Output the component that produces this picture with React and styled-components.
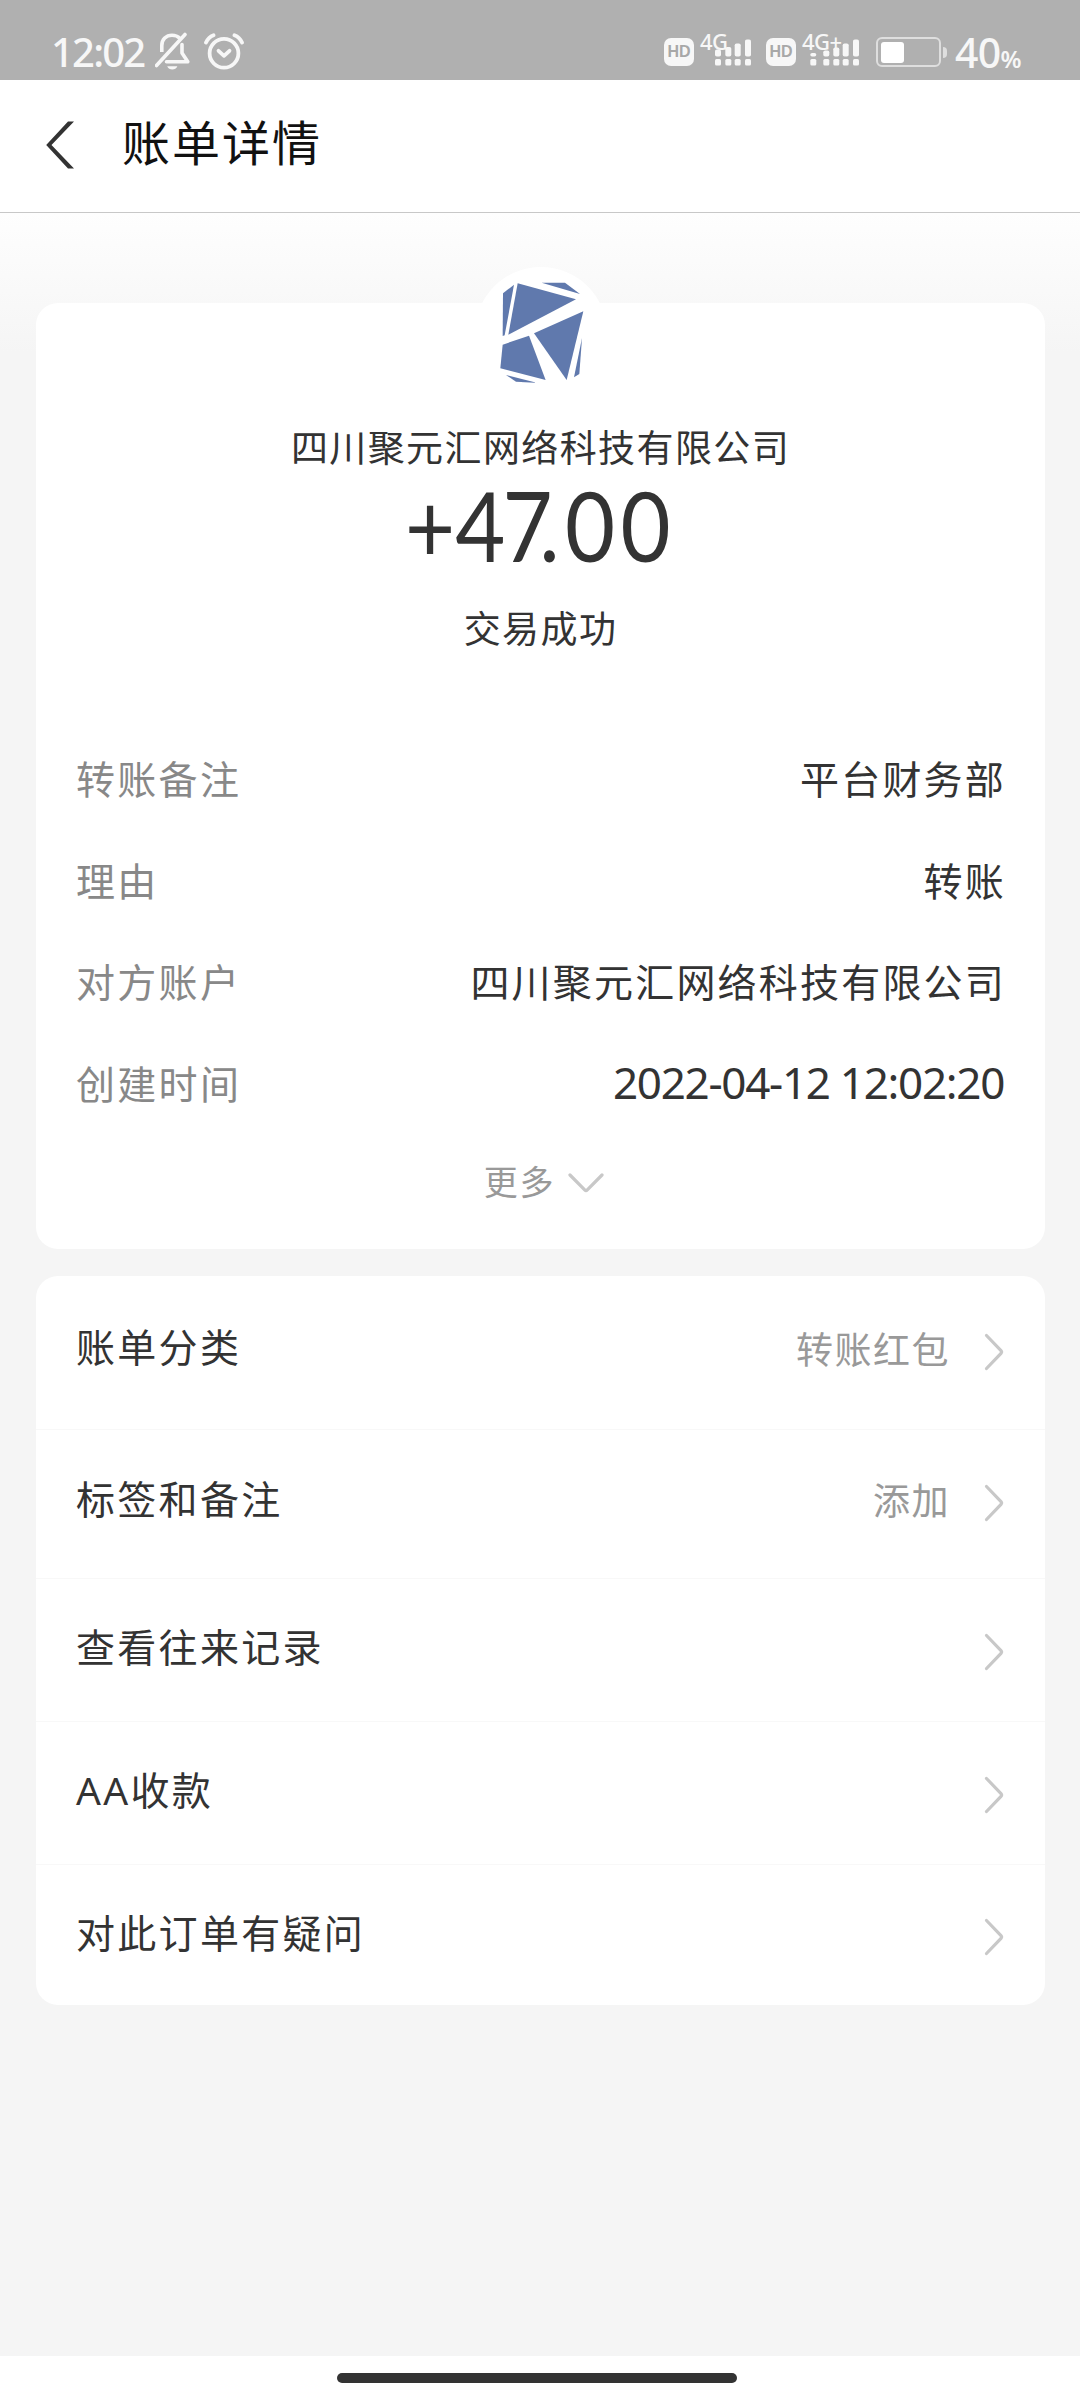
import styled, { createGlobalStyle } from 'styled-components';

const details = [
  { label: '转账备注', value: '平台财务部' },
  { label: '理由', value: '转账' },
  { label: '对方账户', value: '四川聚元汇网络科技有限公司' },
  { label: '创建时间', value: '2022-04-12 12:02:20', numeric: true },
];

const actions = [
  { label: '账单分类', value: '转账红包', height: 153 },
  { label: '标签和备注', value: '添加', height: 149 },
  { label: '查看往来记录', height: 143, shift: 5 },
  { label: 'AA收款', height: 143, shift: 5 },
  { label: '对此订单有疑问', height: 141, shift: 6 },
];

const MuteIcon = () => (
  <svg width="36" height="40" viewBox="0 0 36 40" fill="none" stroke="#f7f7f7" strokeWidth="3.6">
    <path d="M6.8 21v-6.5c0-6.2 4.4-10.3 10.2-10.3 3.2 0 5.8 1 7.7 3" />
    <path d="M1.5 34.5 30 3.5" strokeLinecap="round" />
    <path d="M27 13.5v8.5l5.800 8.700H11.500" strokeLinejoin="round" strokeLinecap="round" />
    <path d="M12.200 35.200h10.200c-1 2.300-2.800 3.300-5.100 3.300s-4.100-1-5.100-3.300z" fill="#f7f7f7" stroke="none" />
  </svg>
);

const AlarmIcon = () => (
  <svg width="40" height="40" viewBox="0 0 40 40" fill="none" stroke="#f7f7f7" strokeWidth="3.8" strokeLinecap="round">
    <circle cx="20" cy="22.3" r="14.4" />
    <path d="M14.5 19.8 20 24.8l5.500-5" strokeLinejoin="round" />
    <path d="M2 11.500C3.500 8 6 5.500 9.500 4.200M38 11.500C36.500 8 34 5.500 30.500 4.200" />
  </svg>
);

const SignalBars = ({ tops, xs, width }) => (
  <svg width={width} height="40" viewBox={`0 0 ${width} 40`} fill="#f7f7f7">
    {tops.map((top, i) => (
      <g key={xs[i]}>
        <rect x={xs[i]} y={top} width="6" height={25.5 - top} rx="1.8" />
        <rect x={xs[i]} y="28" width="6" height="6.5" rx="1.5" />
      </g>
    ))}
  </svg>
);

const BackIcon = () => (
  <svg width="30" height="48" viewBox="0 0 30 48" fill="#333">
    <path d="M22 .5h6L5.500 24l22.500 23.500h-6L.2 24z" />
  </svg>
);

const ArrowRight = () => (
  <svg width="20" height="28" viewBox="0 0 20 28" fill="none" stroke="#c8c8c8" strokeWidth="3.2" strokeLinecap="round" strokeLinejoin="round" overflow="visible">
    <path d="M2.500-2.500 17 12.700q1.200 1.300 0 2.600L2.500 30.500" />
  </svg>
);

const ArrowDown = () => (
  <svg width="36" height="20" viewBox="0 0 36 20" fill="none" stroke="#c8c8c8" strokeWidth="3.2" strokeLinecap="round" strokeLinejoin="round">
    <path d="M2 2 16.700 16.800q1.300 1.300 2.600 0L34 2" />
  </svg>
);

const CompanyLogo = () => (
  <svg width="84" height="102" viewBox="180 126 252 306" fill="#6079ad">
    <path d="M189 160 222 134 194 286 188 288z" />
    <path d="M233 130 408 178 205 284z" />
    <path d="M305 128H375L420 162z" />
    <path d="M430 214 380 420 282 280z" />
    <path d="M188 314 267 287 317 420 181 385z" />
    <path d="M198 405 290 428 228 425z" />
    <path d="M426 294 418 402 402 412z" />
  </svg>
);

const App = () => {
  return (
    <Page>
      <GlobalStyle />
      <StatusBar>
        <StatusGroup>
          <Clock>12:02</Clock>
          <MuteIcon />
          <AlarmIcon />
        </StatusGroup>
        <StatusGroup>
          <HdBadge>HD</HdBadge>
          <Signal $width={72}>
            <NetLabel>4G</NetLabel>
            <SignalBars width={58} xs={[21, 31.3, 40.7, 51]} tops={[18.5, 16, 12.5, 8.5]} />
          </Signal>
          <HdBadge>HD</HdBadge>
          <Signal $width={80}>
            <NetLabel>4G+</NetLabel>
            <SignalBars width={64} xs={[14.3, 27.3, 37.3, 46.7, 57]} tops={[22, 19.5, 16.5, 12.5, 8.5]} />
          </Signal>
          <Battery>
            <BatteryLevel />
          </Battery>
          <BatteryTip />
          <Percent>
            40<small>%</small>
          </Percent>
        </StatusGroup>
      </StatusBar>

      <Header>
        <BackIcon />
        <Title>账单详情</Title>
      </Header>

      <Content>
        <Card>
          <Avatar>
            <CompanyLogo />
          </Avatar>
          <Payee>四川聚元汇网络科技有限公司</Payee>
          <Amount>
            <Digits $gap={0}>+</Digits>
            <Digits $gap={-3}>4</Digits>
            <Digits $gap={-15}>7</Digits>
            <Digits $gap={6}>.00</Digits>
          </Amount>
          <Result>交易成功</Result>
          <DetailList>
            {details.map((item) => (
              <DetailRow key={item.label}>
                <DetailLabel>{item.label}</DetailLabel>
                <DetailValue $numeric={item.numeric}>{item.value}</DetailValue>
              </DetailRow>
            ))}
          </DetailList>
          <More>
            更多
            <ArrowDown />
          </More>
        </Card>

        <ActionCard>
          {actions.map((item) => (
            <ActionRow key={item.label} $height={item.height} $shift={item.shift}>
              <ActionLabel>{item.label}</ActionLabel>
              {item.value && <ActionValue>{item.value}</ActionValue>}
              <ArrowRight />
            </ActionRow>
          ))}
        </ActionCard>
      </Content>

      <NavBar>
        <HomeIndicator />
      </NavBar>
    </Page>
  );
};

const GlobalStyle = createGlobalStyle`
  * {
    box-sizing: border-box;
  }

  body {
    margin: 0;
    background: #f5f5f5;
  }

  svg {
    display: block;
    flex-shrink: 0;
  }
`;

const Page = styled.div`
  display: flex;
  flex-direction: column;
  width: 1080px;
  height: 2400px;
  overflow: hidden;
  color: #333;
  background: #f5f5f5;
  font-family: 'Noto Sans CJK SC', sans-serif;
`;

const StatusBar = styled.div`
  display: flex;
  justify-content: space-between;
  height: 80px;
  padding: 31px 58px 0 51px;
  color: #f7f7f7;
  background: #b0b0b0;
`;

const StatusGroup = styled.div`
  display: flex;
  align-items: flex-start;
  height: 40px;

  & > svg + svg {
    margin-left: 13px;
  }
`;

const Clock = styled.span`
  width: 104px;
  font: 500 40px/42px 'Noto Sans', sans-serif;
  letter-spacing: -1.8px;
  white-space: nowrap;
`;

const HdBadge = styled.span`
  width: 30px;
  height: 28px;
  margin-top: 7px;
  border-radius: 7px;
  background: #f7f7f7;
  color: #a8a8a8;
  font: 700 16px/28px 'Liberation Sans', sans-serif;
  text-align: center;
`;

const Signal = styled.span`
  position: relative;
  width: ${({ $width }) => $width}px;
`;

const NetLabel = styled.span`
  position: absolute;
  left: 6px;
  top: -1px;
  font: 500 22px/22px 'Noto Sans', sans-serif;
  letter-spacing: -0.6px;
`;

const Battery = styled.span`
  width: 65px;
  height: 30px;
  margin-top: 6px;
  padding: 3px;
  border: 2px solid #dedede;
  border-radius: 6px;
`;

const BatteryLevel = styled.span`
  display: block;
  width: 23px;
  height: 21px;
  border-radius: 3px;
  background: #fff;
`;

const BatteryTip = styled.span`
  width: 4px;
  height: 11px;
  margin: 16px 8px 0 2px;
  border-radius: 0 4px 4px 0;
  background: #dedede;
`;

const Percent = styled.span`
  width: 67px;
  font: 500 41px/42px 'Noto Sans', sans-serif;
  letter-spacing: -0.7px;
  white-space: nowrap;

  small {
    font-size: 24px;
    font-weight: 600;
  }
`;

const Header = styled.header`
  display: flex;
  align-items: center;
  gap: 46px;
  height: 133px;
  padding-left: 46px;
  border-bottom: 1px solid #c8c8c8;
  background: #fff;

  svg {
    margin-top: -2px;
  }
`;

const Title = styled.h1`
  margin: -12px 0 0;
  color: #111;
  font-size: 48px;
  font-weight: 400;
  line-height: 60px;
  letter-spacing: 2px;
`;

const Content = styled.main`
  flex: 1;
  padding: 90px 35px 0 36px;
  background: linear-gradient(#fefefe, #f5f5f5 140px);
`;

const Card = styled.section`
  display: flex;
  flex-direction: column;
  align-items: center;
  height: 946px;
  border-radius: 22px;
  background: #fff;
`;

const Avatar = styled.div`
  display: flex;
  align-items: center;
  justify-content: center;
  width: 132px;
  height: 132px;
  margin-top: -36px;
  padding-left: 3px;
  border-radius: 50%;
  background: #fff;
`;

const Payee = styled.div`
  margin-top: 22px;
  font-size: 37px;
  line-height: 50px;
  letter-spacing: 1.4px;
`;

const Amount = styled.div`
  display: flex;
  height: 110px;
  margin-top: -1px;
  font: 400 96px/110px Lato, sans-serif;
  transform: scaleX(0.9);
`;

const Digits = styled.span`
  letter-spacing: ${({ $gap }) => $gap}px;
`;

const Result = styled.div`
  margin-top: 22px;
  font-size: 37px;
  line-height: 50px;
  letter-spacing: 1.4px;
`;

const DetailList = styled.div`
  align-self: stretch;
  margin-top: 75px;
  padding: 0 42px 0 40px;
`;

const DetailRow = styled.div`
  display: flex;
  justify-content: space-between;
  height: 101.7px;
  line-height: 100px;
  font-size: 39px;
`;

const DetailLabel = styled.span`
  color: #888;
  letter-spacing: 2.3px;
`;

const DetailValue = styled.span`
  margin-right: -3px;
  letter-spacing: 2.2px;
  ${({ $numeric }) =>
    $numeric &&
    `
    margin-right: -1px;
    font-family: 'Noto Sans', sans-serif;
    font-size: 44px;
    letter-spacing: -1.3px;
  `}
`;

const More = styled.div`
  display: flex;
  align-items: center;
  gap: 13px;
  margin-top: 22px;
  padding-left: 7px;
  color: #999;
  font-size: 34px;
  line-height: 50px;
  letter-spacing: 1.8px;

  svg {
    margin-top: 5px;
  }
`;

const ActionCard = styled.section`
  margin-top: 27px;
  border-radius: 22px;
  background: #fff;
`;

const ActionRow = styled.div`
  display: flex;
  align-items: center;
  height: ${({ $height }) => $height}px;
  padding: ${({ $shift = 0 }) => $shift}px 41px 2px 40px;

  & + & {
    border-top: 1px solid #f8f8f8;
  }
`;

const ActionLabel = styled.span`
  flex: 1;
  margin-top: -9px;
  font-family: 'Noto Sans', 'Noto Sans CJK SC', sans-serif;
  font-size: 39px;
  line-height: 50px;
  letter-spacing: 2.3px;
`;

const ActionValue = styled.span`
  margin: -8px 34px 0 0;
  color: #999;
  font-size: 37px;
  line-height: 50px;
  letter-spacing: 1.5px;
`;

const NavBar = styled.footer`
  display: flex;
  justify-content: center;
  height: 44px;
  padding-top: 17px;
  background: #fff;
`;

const HomeIndicator = styled.div`
  width: 400px;
  height: 10px;
  margin-right: 7px;
  border-radius: 5px;
  background: #333;
`;

export default App;
